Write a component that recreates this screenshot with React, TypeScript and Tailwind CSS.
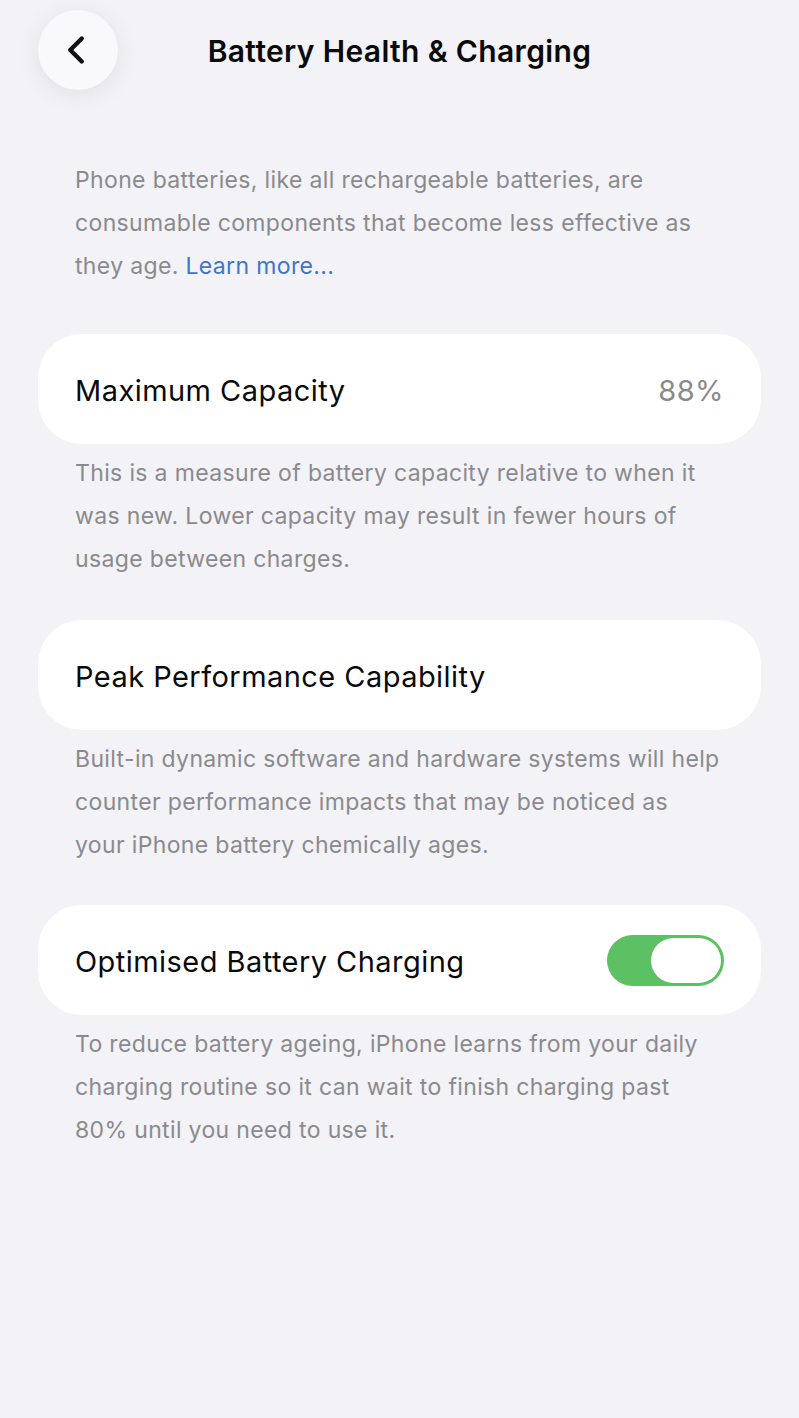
import { ChevronLeft } from 'lucide-react';

const font = { fontFamily: 'Inter, "Noto Sans", sans-serif' };

function Card({ children }: { children: React.ReactNode }) {
  return (
    <div className="mx-[38px] flex h-[110px] items-center justify-between rounded-[44px] bg-white pl-[37px] pr-[37px]">
      {children}
    </div>
  );
}

function Footer({ children }: { children: React.ReactNode }) {
  return (
    <p className="mx-[75px] mt-[8px] text-[23px] leading-[43px] tracking-[0.35px] text-[#8a8a8e]">
      {children}
    </p>
  );
}

export default function App() {
  return (
    <div className="min-h-[1418px] w-[799px] bg-[#f2f2f7]" style={font}>
      {/* Top Bar */}
      <div className="relative flex h-[100px] items-center justify-center">
        <button className="absolute left-[38px] top-[10px] flex h-[80px] w-[80px] items-center justify-center rounded-full bg-[#f9f9fb] shadow-[0_4px_24px_rgba(0,0,0,0.08)]">
          <ChevronLeft size={46} strokeWidth={2.3} className="-ml-[5px] text-[#111]" />
        </button>
        <h1 className="mt-[3px] text-[30px] font-semibold tracking-[0.35px] text-[#0a0a0a]">
          Battery Health &amp; Charging
        </h1>
      </div>

      <p className="mx-[75px] mt-[59px] text-[23px] leading-[43px] tracking-[0.35px] text-[#8a8a8e]">
        Phone batteries, like all rechargeable batteries, are consumable components that become
        less effective as they age. <span className="text-[#3a76d0]">Learn more...</span>
      </p>

      <div className="mt-[46px]">
        <Card>
          <span className="pt-[3px] text-[29px] tracking-[0.45px] text-[#0a0a0a]">Maximum Capacity</span>
          <span className="pt-[3px] text-[29px] tracking-[0.45px] text-[#8a8a8e]">88%</span>
        </Card>
        <Footer>
          This is a measure of battery capacity relative to when it was new. Lower capacity may
          result in fewer hours of usage between charges.
        </Footer>
      </div>

      <div className="mt-[39px]">
        <Card>
          <span className="pt-[3px] text-[29px] tracking-[0.45px] text-[#0a0a0a]">
            Peak Performance Capability
          </span>
        </Card>
        <Footer>
          Built-in dynamic software and hardware systems will help counter performance impacts
          that may be noticed as your iPhone battery chemically ages.
        </Footer>
      </div>

      <div className="mt-[38px]">
        <Card>
          <span className="pt-[3px] text-[29px] tracking-[0.45px] text-[#0a0a0a]">
            Optimised Battery Charging
          </span>
          <div className="flex h-[51px] w-[117px] items-center justify-end rounded-full bg-[#5cc162] p-[3px]">
            <div className="h-[45px] w-[70px] rounded-full bg-white" />
          </div>
        </Card>
        <Footer>
          To reduce battery ageing, iPhone learns from your daily charging routine so it can wait
          to finish charging past 80% until you need to use it.
        </Footer>
      </div>
    </div>
  );
}
